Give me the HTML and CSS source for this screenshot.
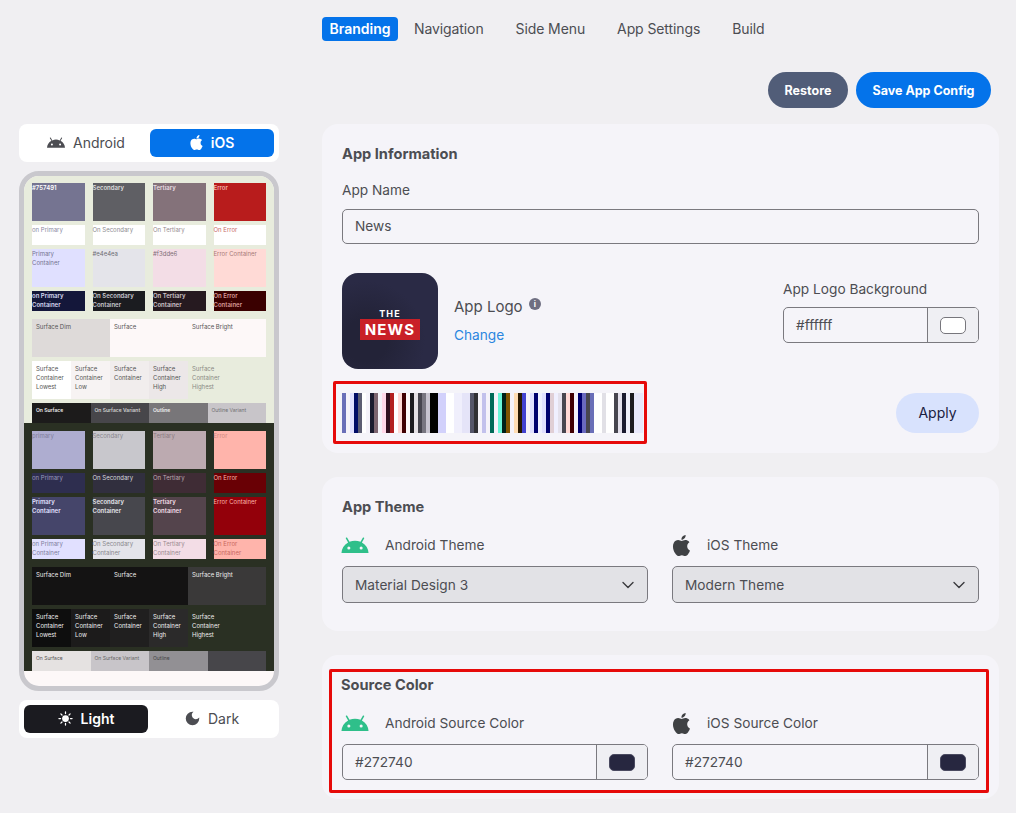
FILE: index.html
```html
<!DOCTYPE html>
<html lang="en">
<head>
    <meta charset="UTF-8">
    <meta name="viewport" content="width=device-width, initial-scale=1.0">
    <title>App Branding</title>
    <link rel="stylesheet" href="styles.css">
</head>
<body>
    <svg class="sprite" width="0" height="0">
        <symbol id="i-android" viewBox="1 5 22 13"><path d="M17.6 9.48l1.84-3.18c.16-.31.04-.69-.26-.85a.637.637 0 0 0-.83.22l-1.88 3.24a11.43 11.43 0 0 0-8.94 0L5.65 5.67a.643.643 0 0 0-.87-.2c-.28.18-.37.54-.22.83L6.4 9.48A10.81 10.81 0 0 0 1 18h22a10.81 10.81 0 0 0-5.4-8.52M7 15.25a1.25 1.25 0 1 1 0-2.5 1.25 1.25 0 0 1 0 2.5m10 0a1.25 1.25 0 1 1 0-2.5 1.25 1.25 0 0 1 0 2.5"/></symbol>
        <symbol id="i-apple" viewBox="3.5 2 17 20"><path d="M18.71 19.5c-.83 1.24-1.71 2.45-3.05 2.47-1.34.03-1.77-.79-3.29-.79-1.53 0-2 .77-3.27.82-1.31.05-2.3-1.32-3.14-2.53C4.25 17 2.94 12.45 4.7 9.39c.87-1.52 2.43-2.48 4.12-2.51 1.28-.02 2.5.87 3.29.87.78 0 2.26-1.07 3.81-.91.65.03 2.47.26 3.64 1.98-.09.06-2.17 1.28-2.15 3.81.03 3.02 2.65 4.03 2.68 4.04-.03.07-.42 1.44-1.38 2.83M13 3.5c.73-.83 1.94-1.46 2.94-1.5.13 1.17-.34 2.35-1.04 3.19-.69.85-1.83 1.51-2.95 1.42-.15-1.15.41-2.35 1.05-3.11z"/></symbol>
        <symbol id="i-chevron" viewBox="0 0 12 8"><path d="M1 1.5l5 5 5-5" fill="none" stroke="currentColor" stroke-width="1.4" stroke-linecap="round" stroke-linejoin="round"/></symbol>
    </svg>

    <div class="page">
        <aside class="side">
            <div class="toggle">
                <div class="toggle-item">
                    <svg class="icon-android-sm"><use href="#i-android"/></svg>
                    Android
                </div>
                <div class="toggle-item active-blue">
                    <svg class="icon-apple-sm"><use href="#i-apple"/></svg>
                    iOS
                </div>
            </div>

            <div class="phone">
                <div class="scheme light">
                    <div class="swatches">
                        <div class="tall primary strong">#757491</div>
                        <div class="tall secondary strong">Secondary</div>
                        <div class="tall tertiary strong">Tertiary</div>
                        <div class="tall error strong">Error</div>
                        <div class="short on-primary">on Primary</div>
                        <div class="short on-secondary">On Secondary</div>
                        <div class="short on-tertiary">On Tertiary</div>
                        <div class="short on-error">On Error</div>
                        <div class="tall primary-c">Primary<br>Container</div>
                        <div class="tall secondary-c">#e4e4ea</div>
                        <div class="tall tertiary-c">#f3dde6</div>
                        <div class="tall error-c">Error Container</div>
                        <div class="short on-primary-c strong">on Primary Container</div>
                        <div class="short on-secondary-c strong">On Secondary Container</div>
                        <div class="short on-tertiary-c strong">On Tertiary Container</div>
                        <div class="short on-error-c strong">On Error Container</div>
                    </div>
                    <div class="surface-row">
                        <div class="surface-dim">Surface Dim</div>
                        <div class="surface">Surface</div>
                        <div class="surface-bright">Surface Bright</div>
                    </div>
                    <div class="container-row">
                        <div class="c-lowest">Surface Container Lowest</div>
                        <div class="c-low">Surface Container Low</div>
                        <div class="c-mid">Surface Container</div>
                        <div class="c-high">Surface Container High</div>
                        <div class="c-highest">Surface Container Highest</div>
                    </div>
                    <div class="on-row">
                        <div class="on-surface strong">On Surface</div>
                        <div class="on-surface-v strong">On Surface Variant</div>
                        <div class="outline strong">Outline</div>
                        <div class="outline-v">Outline Variant</div>
                    </div>
                </div>

                <div class="scheme dark">
                    <div class="swatches">
                        <div class="tall primary">primary</div>
                        <div class="tall secondary">Secondary</div>
                        <div class="tall tertiary">Tertiary</div>
                        <div class="tall error">Error</div>
                        <div class="short on-primary">on Primary</div>
                        <div class="short on-secondary">On Secondary</div>
                        <div class="short on-tertiary">On Tertiary</div>
                        <div class="short on-error">On Error</div>
                        <div class="tall primary-c strong">Primary<br>Container</div>
                        <div class="tall secondary-c strong">Secondary Container</div>
                        <div class="tall tertiary-c strong">Tertiary Container</div>
                        <div class="tall error-c">Error Container</div>
                        <div class="short on-primary-c">on Primary<br>Container</div>
                        <div class="short on-secondary-c">On Secondary Container</div>
                        <div class="short on-tertiary-c">On Tertiary Container</div>
                        <div class="short on-error-c">On Error Container</div>
                    </div>
                    <div class="surface-row">
                        <div class="surface-dim">Surface Dim</div>
                        <div class="surface">Surface</div>
                        <div class="surface-bright">Surface Bright</div>
                    </div>
                    <div class="container-row">
                        <div class="c-lowest">Surface Container Lowest</div>
                        <div class="c-low">Surface Container Low</div>
                        <div class="c-mid">Surface Container</div>
                        <div class="c-high">Surface Container High</div>
                        <div class="c-highest">Surface Container Highest</div>
                    </div>
                    <div class="on-row">
                        <div class="on-surface">On Surface</div>
                        <div class="on-surface-v">On Surface Variant</div>
                        <div class="outline">Outline</div>
                        <div class="outline-v"></div>
                    </div>
                </div>
                <div class="phone-foot"></div>
            </div>

            <div class="toggle mode">
                <div class="toggle-item active-dark">
                    <svg class="icon-mode" viewBox="0 0 24 24">
                        <circle cx="12" cy="12" r="5.4" fill="currentColor"/>
                        <path d="M12 1.5v2.6M12 19.9v2.6M1.5 12h2.6M19.9 12h2.6M4.6 4.6l1.8 1.8M17.6 17.6l1.8 1.8M4.6 19.4l1.8-1.8M17.6 6.4l1.8-1.8" stroke="currentColor" stroke-width="2" stroke-linecap="round"/>
                    </svg>
                    Light
                </div>
                <div class="toggle-item">
                    <svg class="icon-mode" viewBox="2 2 20 20"><path d="M12 3a9 9 0 1 0 9 9c0-.46-.04-.92-.1-1.36a5.389 5.389 0 0 1-4.4 2.26 5.403 5.403 0 0 1-3.14-9.8c-.44-.06-.9-.1-1.36-.1z"/></svg>
                    Dark
                </div>
            </div>
        </aside>

        <main class="main">
            <nav class="tabs">
                <a class="tab tab-active">Branding</a>
                <a class="tab">Navigation</a>
                <a class="tab">Side Menu</a>
                <a class="tab">App Settings</a>
                <a class="tab">Build</a>
            </nav>

            <div class="actions">
                <button class="btn btn-grey">Restore</button>
                <button class="btn btn-blue">Save App Config</button>
            </div>

            <section class="card card-info">
                <h2 class="card-title">App Information</h2>
                <label class="label">App Name</label>
                <div class="input">News</div>

                <div class="logo-row">
                    <div class="logo">
                        <span class="logo-the">THE</span>
                        <span class="logo-news">NEWS</span>
                    </div>
                    <div class="logo-text">
                        <div class="logo-name">App Logo <span class="info">i</span></div>
                        <a class="change">Change</a>
                    </div>
                    <div class="logo-bg">
                        <label class="label">App Logo Background</label>
                        <div class="color-input">
                            <span class="color-value">#ffffff</span>
                            <span class="color-addon"><i class="chip chip-white"></i></span>
                        </div>
                    </div>
                </div>

                <div class="palette-row">
                    <div class="palette-box"><div class="palette-strip"></div></div>
                    <button class="btn-apply">Apply</button>
                </div>
            </section>

            <section class="card card-theme">
                <h2 class="card-title">App Theme</h2>
                <div class="two-col">
                    <div>
                        <div class="platform-label">
                            <svg class="icon-android"><use href="#i-android"/></svg>
                            Android Theme
                        </div>
                        <div class="select">Material Design 3 <svg class="chevron"><use href="#i-chevron"/></svg></div>
                    </div>
                    <div>
                        <div class="platform-label">
                            <svg class="icon-apple"><use href="#i-apple"/></svg>
                            iOS Theme
                        </div>
                        <div class="select">Modern Theme <svg class="chevron"><use href="#i-chevron"/></svg></div>
                    </div>
                </div>
            </section>

            <section class="card card-source">
                <div class="highlight">
                    <h2 class="card-title">Source Color</h2>
                    <div class="two-col">
                        <div>
                            <div class="platform-label">
                                <svg class="icon-android"><use href="#i-android"/></svg>
                                Android Source Color
                            </div>
                            <div class="color-input">
                                <span class="color-value">#272740</span>
                                <span class="color-addon"><i class="chip chip-navy"></i></span>
                            </div>
                        </div>
                        <div>
                            <div class="platform-label">
                                <svg class="icon-apple"><use href="#i-apple"/></svg>
                                iOS Source Color
                            </div>
                            <div class="color-input">
                                <span class="color-value">#272740</span>
                                <span class="color-addon"><i class="chip chip-navy"></i></span>
                            </div>
                        </div>
                    </div>
                </div>
            </section>
        </main>
    </div>
</body>
</html>
```

FILE: styles.css
```css
* {
    margin: 0;
    padding: 0;
    box-sizing: border-box;
}

html, body {
    height: 813px;
    overflow: hidden;
}

body {
    font-family: 'Inter', 'Open Sans', sans-serif;
    font-size: 13.7px;
    color: #4c4d52;
    background: #f0eff2;
}

.sprite {
    position: absolute;
}

.page {
    display: flex;
    align-items: flex-start;
    padding-left: 19px;
}

/* left column */
.side {
    width: 260px;
    margin-top: 124px;
    margin-right: 43px;
    flex-shrink: 0;
}

.toggle {
    display: flex;
    height: 38px;
    padding: 5px;
    gap: 2px;
    background: #fff;
    border-radius: 8px;
}

.toggle-item {
    flex: 1;
    display: flex;
    align-items: center;
    justify-content: center;
    gap: 8px;
    padding-bottom: 1px;
    border-radius: 6px;
    font-size: 14px;
    color: #4c4d52;
}

.toggle-item svg {
    fill: currentColor;
}

.active-blue {
    background: #0473ea;
    color: #fff;
    font-weight: 600;
}

.active-dark {
    background: #1b1b20;
    color: #fff;
    font-weight: 600;
}

.icon-android-sm {
    width: 18px;
    height: 11px;
}

.icon-apple-sm {
    width: 13px;
    height: 15px;
}

.icon-mode {
    width: 15px;
    height: 15px;
}

.mode {
    margin-top: 9px;
}

.phone {
    margin-top: 9px;
    height: 520px;
    border: 5px solid #c9c8cd;
    border-radius: 20px;
    background: #fdf8f8;
    overflow: hidden;
}

.scheme {
    padding: 7px 8px 0;
    font-size: 6px;
    line-height: 9px;
}

.light {
    background: #e8ecdd;
    color: #555;
}

.dark {
    padding-top: 8px;
    background: #2a3023;
    color: #eee;
}

.phone-foot {
    height: 15px;
}

.swatches {
    display: grid;
    grid-template-columns: repeat(4, 1fr);
    grid-template-rows: 38px 20px 38px 20px;
    gap: 4px 8px;
}

.strong {
    font-weight: 600;
}

.surface-row,
.container-row,
.on-row {
    display: flex;
}

.surface-row {
    height: 38px;
    margin-top: 8px;
}

.surface-row > div {
    flex: 1;
    padding: 3px 4px;
}

.container-row {
    height: 38px;
    margin-top: 4px;
}

.container-row > div {
    width: 39px;
    padding: 3px 4px;
}

.on-row {
    height: 20px;
    margin-top: 4px;
    font-size: 5px;
}

.on-row > div {
    flex: 1;
    padding: 3px 4px;
}

/* light scheme colours */
.light .primary { background: #757491; color: #fff; }
.light .secondary { background: #5f5f64; color: #ddd; }
.light .tertiary { background: #84727a; color: #e8dde2; }
.light .error { background: #b81c1c; color: #f0b0a8; }
.light .on-primary { background: #fff; color: #8a899f; }
.light .on-secondary { background: #fff; color: #8c8c90; }
.light .on-tertiary { background: #fff; color: #968a90; }
.light .on-error { background: #fff; color: #c86a6a; }
.light .primary-c { background: #e0e0ff; color: #757491; }
.light .secondary-c { background: #e4e4ea; color: #6c6c72; }
.light .tertiary-c { background: #f3dde6; color: #7e6e76; }
.light .error-c { background: #ffdad6; color: #a87a78; }
.light .on-primary-c { background: #14173a; color: #d8d8f0; }
.light .on-secondary-c { background: #1b1c20; color: #c8c8d0; }
.light .on-tertiary-c { background: #261a20; color: #d0c4ca; }
.light .on-error-c { background: #3a0000; color: #d89a98; }
.light .surface-dim { background: #dedad9; }
.light .surface,
.light .surface-bright { background: #fdf8f8; }
.light .c-lowest { background: #fff; }
.light .c-low { background: #f7f3f3; }
.light .c-mid { background: #f1eded; }
.light .c-high { background: #ece7e8; }
.light .c-highest { color: #8a8a84; }
.light .on-surface { background: #1c1b1b; color: #eee; }
.light .on-surface-v { background: #47464a; color: #d0d0d0; }
.light .outline { background: #787679; color: #eee; }
.light .outline-v { background: #c8c5c9; color: #6f6f72; }

/* dark scheme colours */
.dark .primary { background: #aeadd0; color: #7f7e9c; }
.dark .secondary { background: #c8c7cc; color: #88888c; }
.dark .tertiary { background: #bcaab0; color: #8a7a80; }
.dark .error { background: #ffb4ab; color: #d08a80; }
.dark .on-primary { background: #2e2e4f; color: #9a99bb; }
.dark .on-secondary { background: #312f3e; color: #d8d8dc; }
.dark .on-tertiary { background: #3f2c35; color: #bcaab0; }
.dark .on-error { background: #690005; color: #ffb4ab; }
.dark .primary-c { background: #45456a; color: #e1e0ff; }
.dark .secondary-c { background: #47474d; color: #e4e4ea; }
.dark .tertiary-c { background: #54444c; color: #f3dde6; }
.dark .error-c { background: #93000a; color: #ffb4ab; }
.dark .on-primary-c { background: #e1e0ff; color: #7f7e9c; }
.dark .on-secondary-c { background: #e4e4ea; color: #88888c; }
.dark .on-tertiary-c { background: #f3dde6; color: #9a8a90; }
.dark .on-error-c { background: #ffb4ab; color: #c8685e; }
.dark .surface-dim,
.dark .surface { background: #141313; }
.dark .surface-bright { background: #3a3939; }
.dark .c-lowest { background: #0e0e0e; }
.dark .c-low { background: #1c1b1b; }
.dark .c-mid { background: #201f1f; }
.dark .c-high { background: #2b2a2a; }
.dark .on-surface { background: #e5e2e1; color: #555; }
.dark .on-surface-v { background: #c8c5c9; color: #666; }
.dark .outline { background: #929094; color: #444; }
.dark .outline-v { background: #47464a; }

/* right column */
.main {
    width: 677px;
}

.tabs {
    display: flex;
    align-items: center;
    gap: 9px;
    padding-top: 17px;
}

.tab {
    height: 24px;
    padding: 0 7px;
    font-size: 14px;
    line-height: 24px;
    letter-spacing: -0.1px;
    margin-right: 9px;
    border-radius: 4px;
    color: #4c4d52;
}

.tab-active {
    width: 76px;
    background: #0473ea;
    color: #fff;
    font-weight: 600;
    letter-spacing: 0;
    text-align: center;
    margin-right: 0;
}

.actions {
    display: flex;
    justify-content: flex-end;
    gap: 8px;
    margin-top: 31px;
    padding-right: 8px;
}

.btn {
    height: 36px;
    border: none;
    border-radius: 18px;
    color: #fff;
    font-family: inherit;
    font-size: 12.5px;
    font-weight: 700;
}

.btn-grey {
    width: 80px;
    background: #515d78;
}

.btn-blue {
    width: 135px;
    background: #0473ea;
}

.card {
    padding: 20px 20px 0;
    background: #f5f4f9;
    border-radius: 16px;
}

.card-info {
    height: 329px;
    margin-top: 16px;
}

.card-theme {
    height: 154px;
    margin-top: 24px;
}

.card-source {
    height: 144px;
    margin-top: 24px;
    padding: 14px 10px 0 7px;
}

.card-title {
    font-size: 14.6px;
    line-height: 20px;
    font-weight: 700;
    color: #4c4d52;
}

.label {
    display: block;
    margin-top: 16px;
    line-height: 20px;
}

.input {
    height: 35px;
    margin-top: 9px;
    padding: 0 12px;
    line-height: 33px;
    border: 1px solid #7a797f;
    border-radius: 5px;
}

.logo-row {
    display: flex;
    margin-top: 29px;
}

.logo {
    display: flex;
    flex-direction: column;
    align-items: center;
    justify-content: center;
    width: 96px;
    height: 96px;
    padding-top: 5px;
    background: radial-gradient(circle at 25% 70%, #232338 0 22%, #2a2a45 60%);
    border-radius: 16px;
    color: #fff;
    font-weight: 700;
    flex-shrink: 0;
}

.logo-the {
    font-size: 9px;
    line-height: 11px;
    letter-spacing: 1.1px;
}

.logo-news {
    width: 60px;
    height: 21px;
    background: #c92027;
    font-size: 15px;
    line-height: 21px;
    letter-spacing: 1.2px;
    text-align: center;
}

.logo-text {
    margin-left: 16px;
    padding-top: 24px;
}

.logo-name {
    font-size: 15px;
    line-height: 20px;
}

.info {
    display: inline-block;
    width: 12px;
    height: 12px;
    margin-left: 2px;
    vertical-align: 5px;
    background: #6f6f82;
    border-radius: 50%;
    color: #fff;
    font-size: 8px;
    line-height: 12px;
    font-weight: 700;
    text-align: center;
}

.change {
    display: block;
    margin-top: 8px;
    color: #2a86e0;
    line-height: 20px;
}

.logo-bg {
    width: 196px;
    margin-left: auto;
}

.logo-bg .label {
    margin-top: 6px;
}

.logo-bg .color-input {
    margin-top: 8px;
}

.color-input {
    display: flex;
    height: 36px;
    border: 1px solid #7a797f;
    border-radius: 5px;
    overflow: hidden;
}

.color-value {
    flex: 1;
    padding-left: 12px;
    line-height: 34px;
}

.color-addon {
    display: flex;
    align-items: center;
    justify-content: center;
    width: 51px;
    background: #efeff3;
    border-left: 1px solid #7a797f;
}

.chip {
    display: block;
    width: 26px;
    height: 17px;
    border-radius: 5px;
}

.chip-white {
    background: #fff;
    border: 1px solid #77767c;
}

.chip-navy {
    background: #272740;
    border: 1px solid #4a4a60;
}

.palette-row {
    display: flex;
    align-items: flex-start;
    justify-content: space-between;
    margin-top: 12px;
    margin-left: -9px;
}

.palette-box {
    width: 314px;
    height: 63px;
    padding: 9px 1px 0 6px;
    border: 3px solid #e60a0a;
    border-radius: 2px;
}

.palette-strip {
    width: 301px;
    height: 40px;
    background: linear-gradient(90deg,
        #6a6fb8 0 4px, #f5f3fa 4px 8px, #e0e0ff 8px 12px, #000c66 12px 16px,
        #5c5d72 16px 20px, #fff 20px 24px, #f5f3fa 24px 28px, #1b1b2f 28px 32px,
        #7d6570 32px 36px, #f5f3fa 36px 40px, #ffd8e8 40px 44px, #30111f 44px 48px,
        #b3201f 48px 52px, #fff 52px 56px, #ffdad6 56px 60px, #410002 60px 64px,
        #fdf8f8 64px 68px, #1c1b1f 68px 72px, #e5e1e5 72px 76px, #47464f 76px 80px,
        #787680 80px 84px, #c8c5d0 84px 88px, #000 88px 96px, #d2d1fb 96px 104px,
        #fff 104px 112px, #f0effc 112px 120px, #e5e4f8 120px 128px, #55566a 128px 132px,
        #303034 132px 136px, #f5f3fa 136px 140px, #c2c1ec 140px 144px, #f5f3fa 144px 148px,
        #006a58 148px 152px, #f5f3fa 152px 156px, #6bf5d8 156px 160px, #00201a 160px 164px,
        #7f5200 164px 168px, #f5f3fa 168px 172px, #ffddb3 172px 176px, #281800 176px 180px,
        #4343d0 180px 184px, #f5f3fa 184px 188px, #e1e0ff 188px 192px, #00006e 192px 196px,
        #f0f0ff 196px 200px, #e1e0ff 200px 204px, #00006e 204px 208px, #e0cfd5 208px 212px,
        #f0f0ff 212px 216px, #e4e1ec 216px 220px, #47464f 220px 224px, #ffdad6 224px 228px,
        #410002 228px 232px, #f5f3fa 232px 236px, #00006e 236px 240px, #6a6abf 240px 244px,
        #47464f 244px 248px, #6a6fb8 248px 252px, #fff 252px 260px, #e1e0e6 260px 264px,
        #fff 264px 272px, #47464f 272px 276px, #e4e1ec 276px 280px, #1b1b2f 280px 284px,
        #f0f0fa 284px 288px, #1c1b1f 288px 292px, #e8e8fa 292px 301px);
}

.btn-apply {
    width: 83px;
    height: 40px;
    margin-top: 12px;
    padding-bottom: 2px;
    border: none;
    border-radius: 20px;
    background: #d8e2fd;
    color: #1a2040;
    font-family: inherit;
    font-size: 14px;
}

.two-col {
    display: grid;
    grid-template-columns: 306px 307px;
    gap: 24px;
    margin-top: 16px;
}

.platform-label {
    display: flex;
    align-items: center;
    gap: 16px;
    height: 24px;
    margin-bottom: 9px;
}

.platform-label svg {
    flex-shrink: 0;
}

.icon-android {
    width: 28px;
    height: 16px;
    margin-left: -1px;
    fill: #2fbf8a;
}

.icon-apple {
    width: 19px;
    height: 21px;
    fill: #3f4144;
}

.select {
    display: flex;
    align-items: center;
    justify-content: space-between;
    height: 37px;
    padding: 0 13px 0 12px;
    background: #e2e2e6;
    border: 1px solid #7a797f;
    border-radius: 5px;
}

.chevron {
    width: 12px;
    height: 8px;
    color: #3a3a3e;
}

.highlight {
    height: 124px;
    padding: 3px 7px 0 9px;
    border: 3px solid #e60a0a;
    border-radius: 2px;
}

.highlight .two-col {
    padding-left: 1px;
}
```
